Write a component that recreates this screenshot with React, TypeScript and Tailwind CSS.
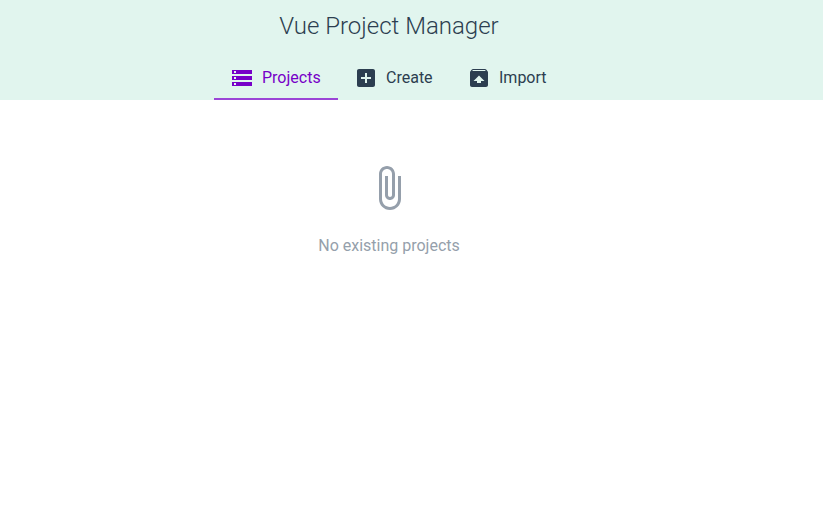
import React from 'react';

const icons = {
  storage: 'M2 20h20v-4H2v4zm2-3h2v2H4v-2zM2 4v4h20V4H2zm4 3H4V5h2v2zm-4 7h20v-4H2v4zm2-3h2v2H4v-2z',
  add: 'M19 3H5c-1.11 0-2 .9-2 2v14c0 1.1.89 2 2 2h14c1.1 0 2-.9 2-2V5c0-1.1-.9-2-2-2zm-2 10h-4v4h-2v-4H7v-2h4V7h2v4h4v2z',
  unarchive: 'M20.55 5.22l-1.39-1.68C18.88 3.21 18.47 3 18 3H6c-.47 0-.88.21-1.15.55L3.46 5.22C3.17 5.57 3 6.01 3 6.5V19c0 1.1.89 2 2 2h14c1.1 0 2-.9 2-2V6.5c0-.49-.17-.93-.45-1.28zM12 9.5l5.5 5.5H14v2h-4v-2H6.5L12 9.5zM5.12 5l.82-1h12l.93 1H5.12z',
  clip: 'M16.5 6v11.5c0 2.21-1.79 4-4 4s-4-1.79-4-4V5c0-1.38 1.12-2.5 2.5-2.5s2.5 1.12 2.5 2.5v10.5c0 .55-.45 1-1 1s-1-.45-1-1V6H10v9.5c0 1.38 1.12 2.5 2.5 2.5s2.5-1.12 2.5-2.5V5c0-2.21-1.79-4-4-4S7 2.79 7 5v12.5c0 3.04 2.46 5.5 5.5 5.5s5.5-2.46 5.5-5.5V6h-1.5z',
};

function Icon({ path, className }: { path: string; className: string }) {
  return (
    <svg viewBox="0 0 24 24" fill="currentColor" className={className}>
      <path d={path} />
    </svg>
  );
}

function Tab({ icon, label, width, active = false }: { icon: string; label: string; width: string; active?: boolean }) {
  return (
    <button
      className={
        'flex h-11 items-center gap-2 border-b-2 pt-0.5 pl-4 text-base ' +
        width +
        (active ? ' border-[#9b45d6] text-[#7700c8]' : ' border-transparent text-[#2c3e50]')
      }
    >
      <Icon path={icon} className="size-6 shrink-0" />
      <span className="whitespace-nowrap">{label}</span>
    </button>
  );
}

export default function App() {
  return (
    <div className="h-[525px] bg-white font-[Roboto,sans-serif]">
      <header className="h-[100px] bg-[#e1f5ee] pt-2">
        <h1 className="w-[778px] text-center text-2xl leading-9 font-light text-[#2c3e50]">Vue Project Manager</h1>
        <nav className="mt-3 flex pl-[214px]">
          <Tab icon={icons.storage} label="Projects" width="w-[124px]" active />
          <Tab icon={icons.add} label="Create" width="w-[113px]" />
          <Tab icon={icons.unarchive} label="Import" width="w-[112px]" />
        </nav>
      </header>
      <main className="flex w-[778px] flex-col items-center pt-16 text-[#959fab]">
        <Icon path={icons.clip} className="size-12" />
        <p className="mt-[22px] text-base leading-6">No existing projects</p>
      </main>
    </div>
  );
}
